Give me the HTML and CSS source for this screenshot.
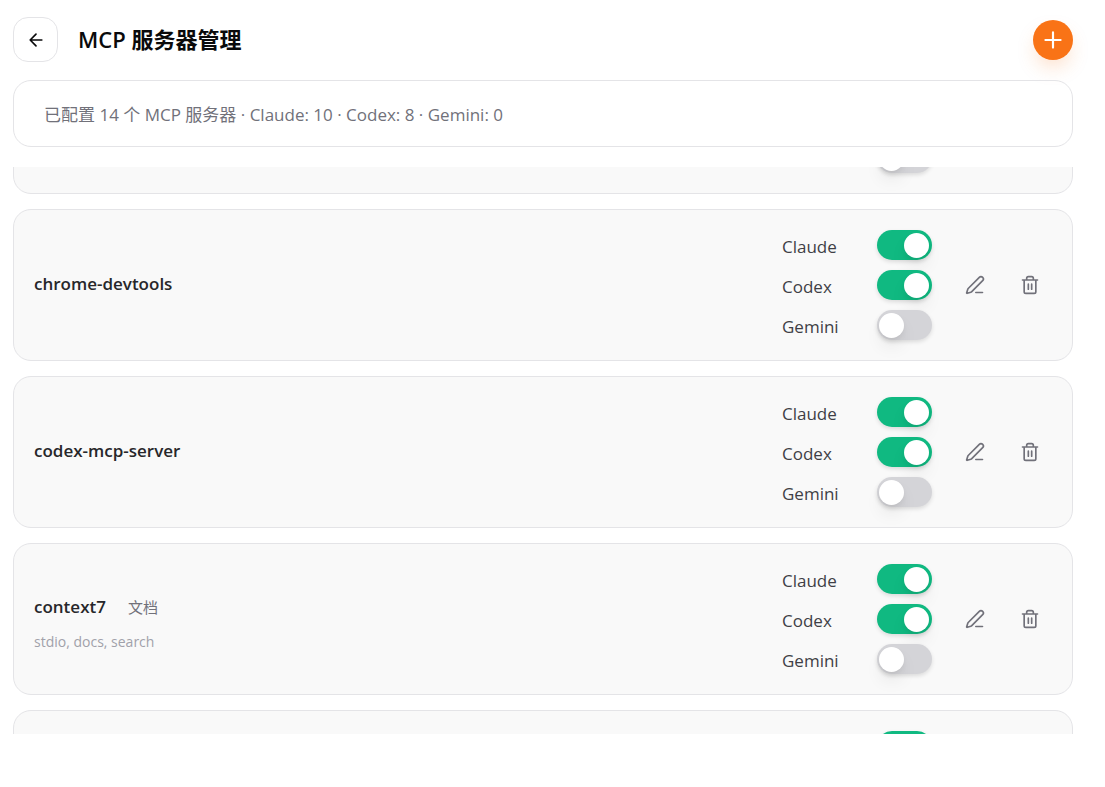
FILE: index.html
```html
<!DOCTYPE html>
<html lang="zh-CN">
<head>
<meta charset="utf-8">
<meta name="viewport" content="width=device-width, initial-scale=1">
<title>MCP 服务器管理</title>
<link rel="stylesheet" href="styles.css">
</head>
<body>
<svg class="sprite" aria-hidden="true">
  <symbol id="i-pen" viewBox="0 0 24 24"><path d="M13 21h8"/><path d="M21.174 6.812a1 1 0 0 0-3.986-3.987L3.842 16.174a2 2 0 0 0-.5.83l-1.321 4.352a.5.5 0 0 0 .623.622l4.353-1.32a2 2 0 0 0 .83-.497z"/></symbol>
  <symbol id="i-trash" viewBox="0 0 24 24"><path d="M3 6h18M19 6v14a2 2 0 0 1-2 2H7a2 2 0 0 1-2-2V6M8 6V4a2 2 0 0 1 2-2h4a2 2 0 0 1 2 2v2M10 11v6M14 11v6"/></symbol>
</svg>
<main class="page">
  <header class="header">
    <button class="back" type="button" aria-label="返回"><svg class="icon" viewBox="0 0 24 24"><path d="M19 12H5M12 19l-7-7 7-7"/></svg></button>
    <h1 class="title">MCP 服务器管理</h1>
    <button class="add" type="button" aria-label="添加"><svg class="icon icon-plus" viewBox="0 0 24 24"><path d="M5 12h14M12 5v14"/></svg></button>
  </header>
  <p class="summary">已配置 14 个 MCP 服务器 · Claude: 10 · Codex: 8 · Gemini: 0</p>
  <section class="list" id="list">
    <article class="card">
      <div class="info"></div>
      <div class="apps">
        <label class="app"><span class="app-name">Claude</span><input class="switch" type="checkbox" checked></label>
        <label class="app"><span class="app-name">Codex</span><input class="switch" type="checkbox" checked></label>
        <label class="app"><span class="app-name">Gemini</span><input class="switch" type="checkbox"></label>
      </div>
      <div class="actions">
        <button class="action" type="button" aria-label="编辑"><svg class="icon"><use href="#i-pen"/></svg></button>
        <button class="action" type="button" aria-label="删除"><svg class="icon"><use href="#i-trash"/></svg></button>
      </div>
    </article>
    <article class="card">
      <div class="info"><div class="name-row"><h2 class="name">chrome-devtools</h2></div></div>
      <div class="apps">
        <label class="app"><span class="app-name">Claude</span><input class="switch" type="checkbox" checked></label>
        <label class="app"><span class="app-name">Codex</span><input class="switch" type="checkbox" checked></label>
        <label class="app"><span class="app-name">Gemini</span><input class="switch" type="checkbox"></label>
      </div>
      <div class="actions">
        <button class="action" type="button" aria-label="编辑"><svg class="icon"><use href="#i-pen"/></svg></button>
        <button class="action" type="button" aria-label="删除"><svg class="icon"><use href="#i-trash"/></svg></button>
      </div>
    </article>
    <article class="card">
      <div class="info"><div class="name-row"><h2 class="name">codex-mcp-server</h2></div></div>
      <div class="apps">
        <label class="app"><span class="app-name">Claude</span><input class="switch" type="checkbox" checked></label>
        <label class="app"><span class="app-name">Codex</span><input class="switch" type="checkbox" checked></label>
        <label class="app"><span class="app-name">Gemini</span><input class="switch" type="checkbox"></label>
      </div>
      <div class="actions">
        <button class="action" type="button" aria-label="编辑"><svg class="icon"><use href="#i-pen"/></svg></button>
        <button class="action" type="button" aria-label="删除"><svg class="icon"><use href="#i-trash"/></svg></button>
      </div>
    </article>
    <article class="card">
      <div class="info info-tagged">
        <div class="name-row"><h2 class="name">context7</h2><a class="docs" href="#docs">文档</a></div>
        <p class="tags">stdio, docs, search</p>
      </div>
      <div class="apps">
        <label class="app"><span class="app-name">Claude</span><input class="switch" type="checkbox" checked></label>
        <label class="app"><span class="app-name">Codex</span><input class="switch" type="checkbox" checked></label>
        <label class="app"><span class="app-name">Gemini</span><input class="switch" type="checkbox"></label>
      </div>
      <div class="actions">
        <button class="action" type="button" aria-label="编辑"><svg class="icon"><use href="#i-pen"/></svg></button>
        <button class="action" type="button" aria-label="删除"><svg class="icon"><use href="#i-trash"/></svg></button>
      </div>
    </article>
    <article class="card">
      <div class="info"></div>
      <div class="apps">
        <label class="app"><span class="app-name">Claude</span><input class="switch" type="checkbox" checked></label>
        <label class="app"><span class="app-name">Codex</span><input class="switch" type="checkbox" checked></label>
        <label class="app"><span class="app-name">Gemini</span><input class="switch" type="checkbox"></label>
      </div>
      <div class="actions">
        <button class="action" type="button" aria-label="编辑"><svg class="icon"><use href="#i-pen"/></svg></button>
        <button class="action" type="button" aria-label="删除"><svg class="icon"><use href="#i-trash"/></svg></button>
      </div>
    </article>
  </section>
</main>
<script src="app.js"></script>
</body>
</html>
```
FILE: styles.css
```css
* { box-sizing: border-box; }
body {
  margin: 0;
  background: #fff;
  color: #0a0a0b;
  font-family: "Open Sans", "Noto Sans CJK SC", sans-serif;
  font-size: 17px;
}
h1, h2, p { margin: 0; }
button { padding: 0; border: 0; background: none; color: inherit; font: inherit; cursor: pointer; }
.sprite { display: none; }
.icon {
  width: 20px;
  height: 20px;
  fill: none;
  stroke: currentColor;
  stroke-width: 2;
  stroke-linecap: round;
  stroke-linejoin: round;
}
.page {
  display: flex;
  flex-direction: column;
  height: 100vh;
  padding: 17px 32px 53px 13px;
}
.header { display: flex; align-items: center; gap: 20px; }
.back, .add, .action { display: flex; align-items: center; justify-content: center; flex: none; }
.back {
  width: 45px;
  height: 45px;
  border: 1px solid #e4e4e7;
  border-radius: 15px;
  background: #fff;
}
.title { flex: 1; padding-bottom: 2px; font-size: 22px; line-height: 30px; font-weight: 600; }
.add {
  width: 40px;
  height: 40px;
  border-radius: 50%;
  background: #f97316;
  color: #fff;
  box-shadow: 0 10px 20px -4px rgba(249, 115, 22, 0.25);
}
.icon-plus { width: 26px; height: 26px; }
.summary {
  margin: 18px 0 20px;
  padding: 21px 30px 19px;
  border: 1px solid #e4e4e7;
  border-radius: 18px;
  color: #71717a;
  line-height: 25px;
}
.list {
  display: flex;
  flex: 1;
  flex-direction: column;
  gap: 15px;
  min-height: 0;
  overflow-y: auto;
  scrollbar-width: none;
}
.card {
  display: flex;
  flex: none;
  align-items: center;
  gap: 20px;
  padding: 20px;
  border: 1px solid #e4e4e7;
  border-radius: 18px;
  background: #f9f9f9;
}
.info { flex: 1; min-width: 0; padding-bottom: 2px; }
.info-tagged { padding: 6px 0 0; }
.name-row { display: flex; align-items: center; gap: 22px; }
.name { color: #27272a; font-size: 17px; line-height: 30px; font-weight: 600; }
.docs { color: #71717a; font-size: 15px; line-height: 30px; text-decoration: none; }
.tags { margin-top: 10px; color: #a1a1aa; font-size: 14px; line-height: 20px; }
.apps { display: grid; gap: 10px; }
.app { display: flex; align-items: center; gap: 15px; height: 30px; }
.app-name { width: 80px; padding-top: 2px; color: #3f3f46; }
.switch {
  appearance: none;
  display: flex;
  align-items: center;
  width: 55px;
  height: 30px;
  margin: 0;
  padding: 0 3px 0 2px;
  border-radius: 15px;
  background: #d4d4d8;
  box-shadow: 0 2px 4px rgba(0, 0, 0, 0.12);
}
.switch::before {
  content: "";
  width: 25px;
  height: 25px;
  border-radius: 50%;
  background: #fff;
  box-shadow: 0 10px 18px -3px rgba(0, 0, 0, 0.1), 0 3px 6px -2px rgba(0, 0, 0, 0.1);
}
.switch:checked { justify-content: flex-end; background: #10b981; }
.actions { display: flex; gap: 10px; }
.action { width: 45px; height: 45px; color: #71717a; }
```
FILE: app.js
```js
document.getElementById("list").scrollTop = 125;
```
